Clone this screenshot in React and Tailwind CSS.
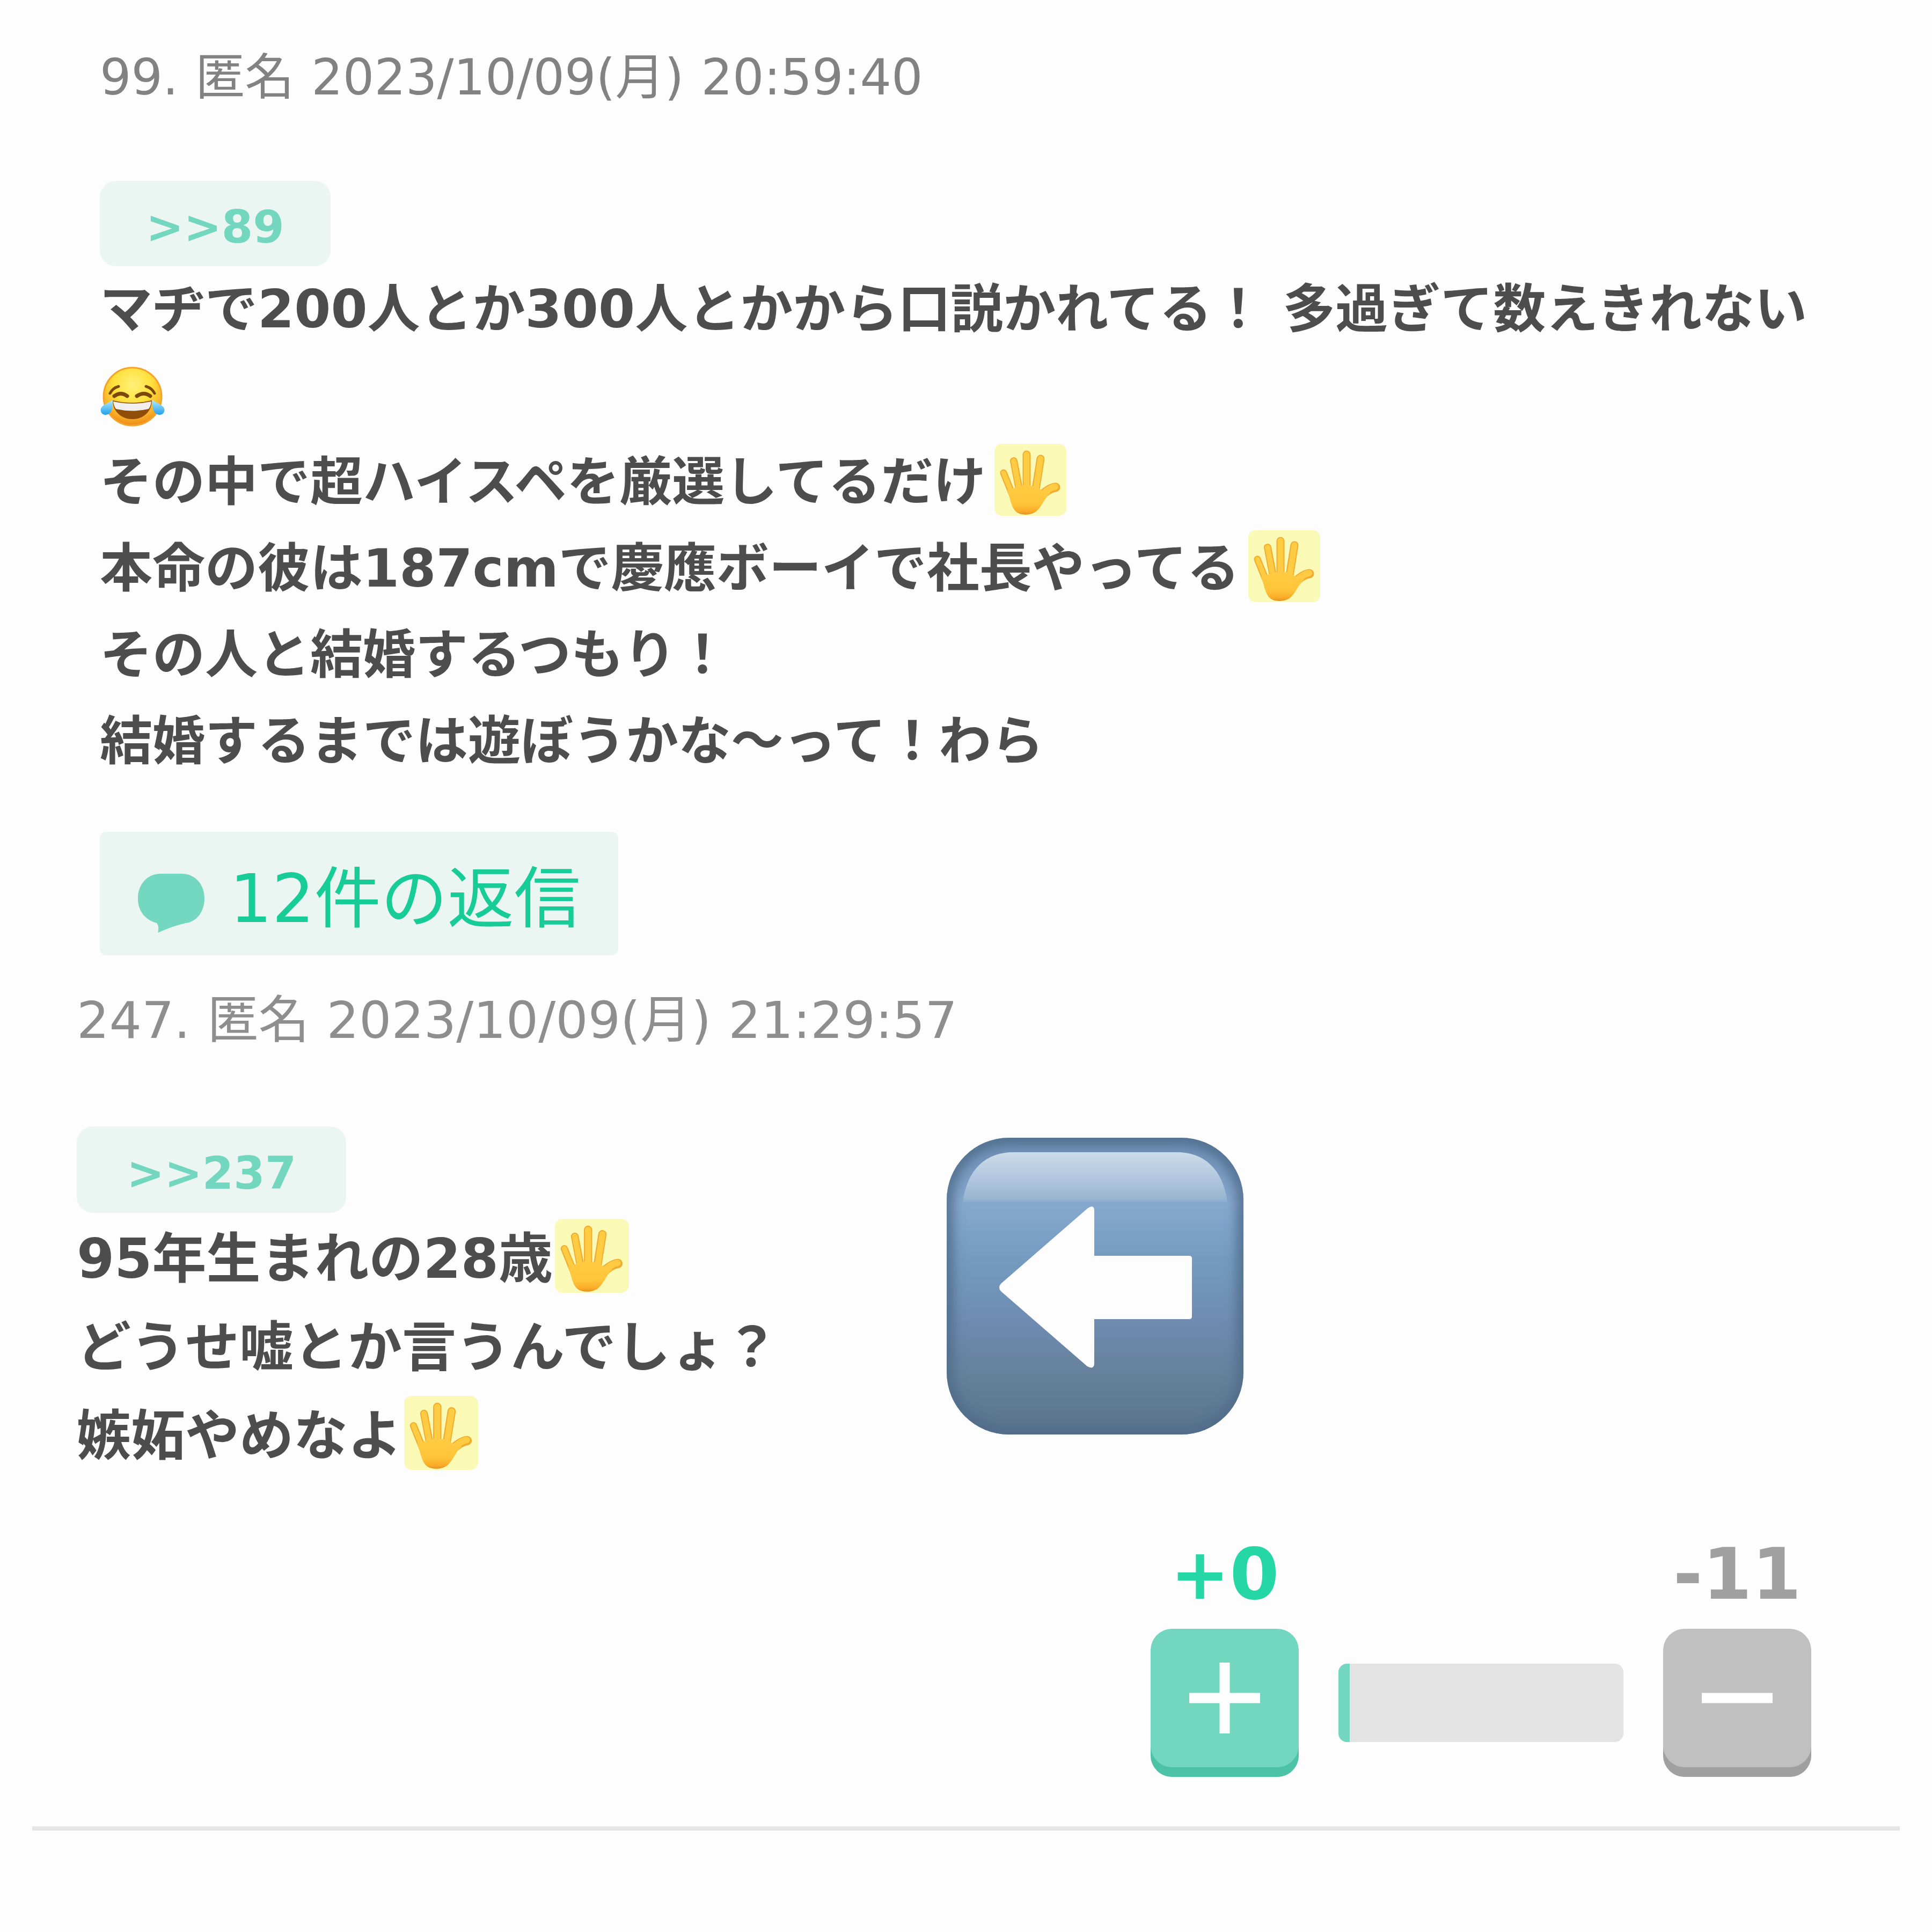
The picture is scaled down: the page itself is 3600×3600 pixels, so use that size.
import { useState } from 'react';

// Raised hand on the pale yellow tile
function Hand({ className }) {
    return (
        <svg viewBox="0 0 134 134" role="img" aria-label="raised hand" className={className}>
            <defs>
                <linearGradient id="palm" gradientUnits="userSpaceOnUse" x1="0" y1="80" x2="0" y2="134">
                    <stop offset="0" stopColor="#ffcb42" />
                    <stop offset="0.6" stopColor="#ffc43a" />
                    <stop offset="0.85" stopColor="#f9ab28" />
                    <stop offset="1" stopColor="#dd8a1e" />
                </linearGradient>
            </defs>
            <rect width="134" height="134" rx="14" fill="#fbf9b6" />
            <g strokeLinecap="round" strokeLinejoin="round" fill="none">
                <g stroke="#f0ac30">
                    <path d="M17 54 L34 96" strokeWidth="13" />
                    <path d="M36 32 L46 84" strokeWidth="14" />
                    <path d="M60 20 V80" strokeWidth="15" />
                    <path d="M86 28 L77 84" strokeWidth="15" />
                    <path d="M114 81 Q102 82 86 98" strokeWidth="17" />
                </g>
                <g stroke="#ffcb42">
                    <path d="M17 54 L34 96" strokeWidth="9" />
                    <path d="M36 32 L46 86" strokeWidth="10" />
                    <path d="M60 20 V84" strokeWidth="11" />
                    <path d="M86 28 L77 86" strokeWidth="11" />
                    <path d="M113 80 Q103 81 86 97" strokeWidth="12" />
                </g>
            </g>
            <path
                d="M24 86 L38 82 C48 76 72 76 82 82 Q90 90 96 84 L104 92 C94 100 90 114 80 124 C70 134 50 134 41 127 C31 119 30 103 24 86 Z"
                fill="url(#palm)"
            />
        </svg>
    );
}

function JoyFace({ className }) {
    return (
        <svg viewBox="0 0 122 114" role="img" aria-label="face with tears of joy" className={className}>
            <defs>
                <radialGradient id="face" cx="0.5" cy="0.3" r="0.72">
                    <stop offset="0" stopColor="#fff07a" />
                    <stop offset="0.45" stopColor="#ffe13c" />
                    <stop offset="0.75" stopColor="#fbb52b" />
                    <stop offset="1" stopColor="#ea8415" />
                </radialGradient>
                <linearGradient id="tear" x1="0" y1="0" x2="0" y2="1">
                    <stop offset="0" stopColor="#b5ecff" />
                    <stop offset="1" stopColor="#1fa0ea" />
                </linearGradient>
            </defs>
            <circle cx="61" cy="57" r="54" fill="url(#face)" stroke="#f5a32b" strokeWidth="3" />
            <g fill="none" stroke="#7c4809" strokeLinecap="round">
                <path d="M19 51 Q24 41 35 38" strokeWidth="5" />
                <path d="M102 51 Q97 41 86 38" strokeWidth="5" />
                <path d="M27 56 Q39 47 51 56" strokeWidth="7" />
                <path d="M69 56 Q82 47 94 56" strokeWidth="7" />
            </g>
            <path d="M24 64 Q60 73 97 64 C97 84 82 99 61 99 C39 99 24 84 24 64 Z" fill="#8f4d08" />
            <path d="M25 66 Q60 74 96 66 Q95 75 91 80 Q60 87 30 80 Q26 75 25 66 Z" fill="#f2eeee" />
            <path d="M24 63 C25 76 23 90 11 91 C1 91 -1 80 5 75 C10 70 17 69 24 63 Z" fill="url(#tear)" />
            <path d="M98 63 C97 76 99 90 111 91 C121 91 123 80 117 75 C112 70 105 69 98 63 Z" fill="url(#tear)" />
        </svg>
    );
}

function LeftArrow({ className }) {
    return (
        <svg viewBox="0 0 553 553" role="img" aria-label="left arrow" className={className}>
            <defs>
                <linearGradient id="key" x1="0" y1="0" x2="0" y2="1">
                    <stop offset="0" stopColor="#6c8cb2" />
                    <stop offset="0.22" stopColor="#86a8cf" />
                    <stop offset="0.42" stopColor="#739bbf" />
                    <stop offset="0.62" stopColor="#6f8bb1" />
                    <stop offset="0.8" stopColor="#65819a" />
                    <stop offset="1" stopColor="#5a738c" />
                </linearGradient>
                <linearGradient id="gloss" x1="0" y1="0" x2="0" y2="1">
                    <stop offset="0" stopColor="#cbdce9" />
                    <stop offset="0.5" stopColor="#b3c8e0" />
                    <stop offset="0.92" stopColor="#9ab6d0" />
                    <stop offset="1" stopColor="#8aaad0" />
                </linearGradient>
                <filter id="soft" x="-10%" y="-10%" width="120%" height="120%">
                    <feGaussianBlur stdDeviation="11" />
                </filter>
                <clipPath id="keyShape">
                    <rect width="553" height="553" rx="116" />
                </clipPath>
            </defs>
            <g clipPath="url(#keyShape)">
                <rect width="553" height="553" fill="url(#key)" />
                <rect width="553" height="553" rx="116" fill="none" stroke="#4d6a88" strokeWidth="22" filter="url(#soft)" />
                <path d="M30 120 C38 58 74 27 124 27 H429 C479 27 515 58 523 120 Z" fill="url(#gloss)" />
            </g>
            <path
                d="M101 272 L262 132 Q275 123 275 136 V220 H452 Q457 220 457 225 V333 Q457 338 452 338 H275 V420 Q275 433 262 426 L101 286 Q95 279 101 272 Z"
                fill="#fdfdfd"
            />
        </svg>
    );
}

function CommentBubble({ className }) {
    return (
        <svg viewBox="0 0 126 112" aria-hidden="true" className={className}>
            <path
                d="M44 1 H82 C109 1 125 22 125 47 C125 72 110 91 90 93 C72 97 56 103 38 111 C40 104 40 98 36 93 C14 87 1 70 1 47 C1 22 17 1 44 1 Z"
                fill="#74d7bf"
            />
        </svg>
    );
}

function VoteButton({ label, color, onClick, children }) {
    return (
        <button
            type="button"
            aria-label={label}
            onClick={onClick}
            className={`flex size-[276px] items-center justify-center rounded-[40px] pb-[18px] ${color}`}
        >
            <svg viewBox="0 0 132 132" aria-hidden="true" className="size-[132px] stroke-white" strokeWidth="19">
                {children}
            </svg>
        </button>
    );
}

function App() {
    const [plus, setPlus] = useState(0);
    const [minus, setMinus] = useState(11);
    const plusShare = Math.max(4, (plus / (plus + minus)) * 100);

    return (
        <main className="min-h-screen bg-[#fdfdfd] pt-[95px] font-['DejaVu_Sans','Noto_Sans_CJK_JP',sans-serif]" lang="ja">
            {/* Comment 99 */}
            <article className="px-[186px]">
                <header className="flex gap-8 text-[92px] leading-[100px] text-[#828282]">
                    <span>99.</span>
                    <span>匿名</span>
                    <span>2023/10/09(月)</span>
                    <time>20:59:40</time>
                </header>

                <a
                    href="#comment-89"
                    className="mt-[142px] flex h-[159px] w-fit items-center rounded-[30px] bg-[#ebf5f2] px-[86px] pt-3 text-[84px] font-bold text-[#73d6be]"
                >
                    &gt;&gt;89
                </a>
                <p className="text-[98px] leading-[161px] font-bold text-[#4d4d4d]">
                    マヂで200人とか300人とかから口説かれてる！ 多過ぎて数えきれない
                    <JoyFace className="inline-block h-[114px] w-[122px] align-[-25px]" />
                    <br />
                    その中で超ハイスペを厳選してるだけ
                    <Hand className="ml-4 inline-block size-[134px] align-[-29px]" />
                    <br />
                    本命の彼は187cmで慶應ボーイで社長やってる
                    <Hand className="ml-4 inline-block size-[134px] align-[-29px]" />
                    <br />
                    その人と結婚するつもり！
                    <br />
                    結婚するまでは遊ぼうかな〜って！わら
                </p>

                <button
                    type="button"
                    className="mt-[88px] flex h-[230px] items-center gap-[46px] rounded-xl bg-[#ebf5f2] px-[70px] pt-5 text-[124px] text-[#18cc98]"
                >
                    <CommentBubble className="mt-4 h-[112px] w-[126px]" />
                    12件の返信
                </button>
            </article>

            {/* Comment 247 */}
            <article className="mt-[71px] pl-[143px]">
                <header className="flex gap-8 text-[95px] leading-[100px] text-[#8e8e8e]">
                    <span>247.</span>
                    <span>匿名</span>
                    <span>2023/10/09(月)</span>
                    <time>21:29:57</time>
                </header>

                <div className="mt-[148px] flex">
                    <div className="w-[1621px]">
                        <a
                            href="#comment-237"
                            className="flex h-[161px] w-fit items-center rounded-[30px] bg-[#ebf5f2] px-[93px] pt-3 text-[84px] font-bold text-[#73d6be]"
                        >
                            &gt;&gt;237
                        </a>
                        <p className="mt-1 text-[101px] leading-[165px] font-bold text-[#4d4d4d]">
                            95年生まれの28歳
                            <Hand className="ml-1 inline-block size-[138px] align-[-28px]" />
                            <br />
                            どうせ嘘とか言うんでしょ？
                            <br />
                            嫉妬やめなよ
                            <Hand className="ml-1 inline-block size-[138px] align-[-28px]" />
                        </p>
                    </div>
                    <LeftArrow className="mt-[21px] size-[553px]" />
                </div>
            </article>

            {/* Votes */}
            <section className="mt-[98px] flex items-end justify-end gap-[74px] pr-[225px] text-[132px] leading-[152px] font-bold">
                <div className="flex flex-col items-center gap-[26px]">
                    <span className="text-[#25d7a5]">+{plus}</span>
                    <VoteButton
                        label="plus"
                        color="bg-[#73d6be] shadow-[inset_0_-18px_0_#4cc3a5]"
                        onClick={() => setPlus(plus + 1)}
                    >
                        <path d="M0 66 H132 M66 0 V132" />
                    </VoteButton>
                </div>
                <div className="mb-[65px] h-[146px] w-[531px] overflow-hidden rounded-2xl bg-[#e3e3e3]">
                    <div className="h-full bg-[#73d6be]" style={{ width: `${plusShare}%` }} />
                </div>
                <div className="flex flex-col items-center gap-[26px]">
                    <span className="text-[#a0a0a0]">-{minus}</span>
                    <VoteButton
                        label="minus"
                        color="bg-[#c0c0c0] shadow-[inset_0_-18px_0_#a0a0a0]"
                        onClick={() => setMinus(minus + 1)}
                    >
                        <path d="M0 66 H132" />
                    </VoteButton>
                </div>
            </section>

            <hr className="mx-[60px] mt-[92px] border-t-8 border-[#e6e6e6]" />
        </main>
    );
}

export default App;
